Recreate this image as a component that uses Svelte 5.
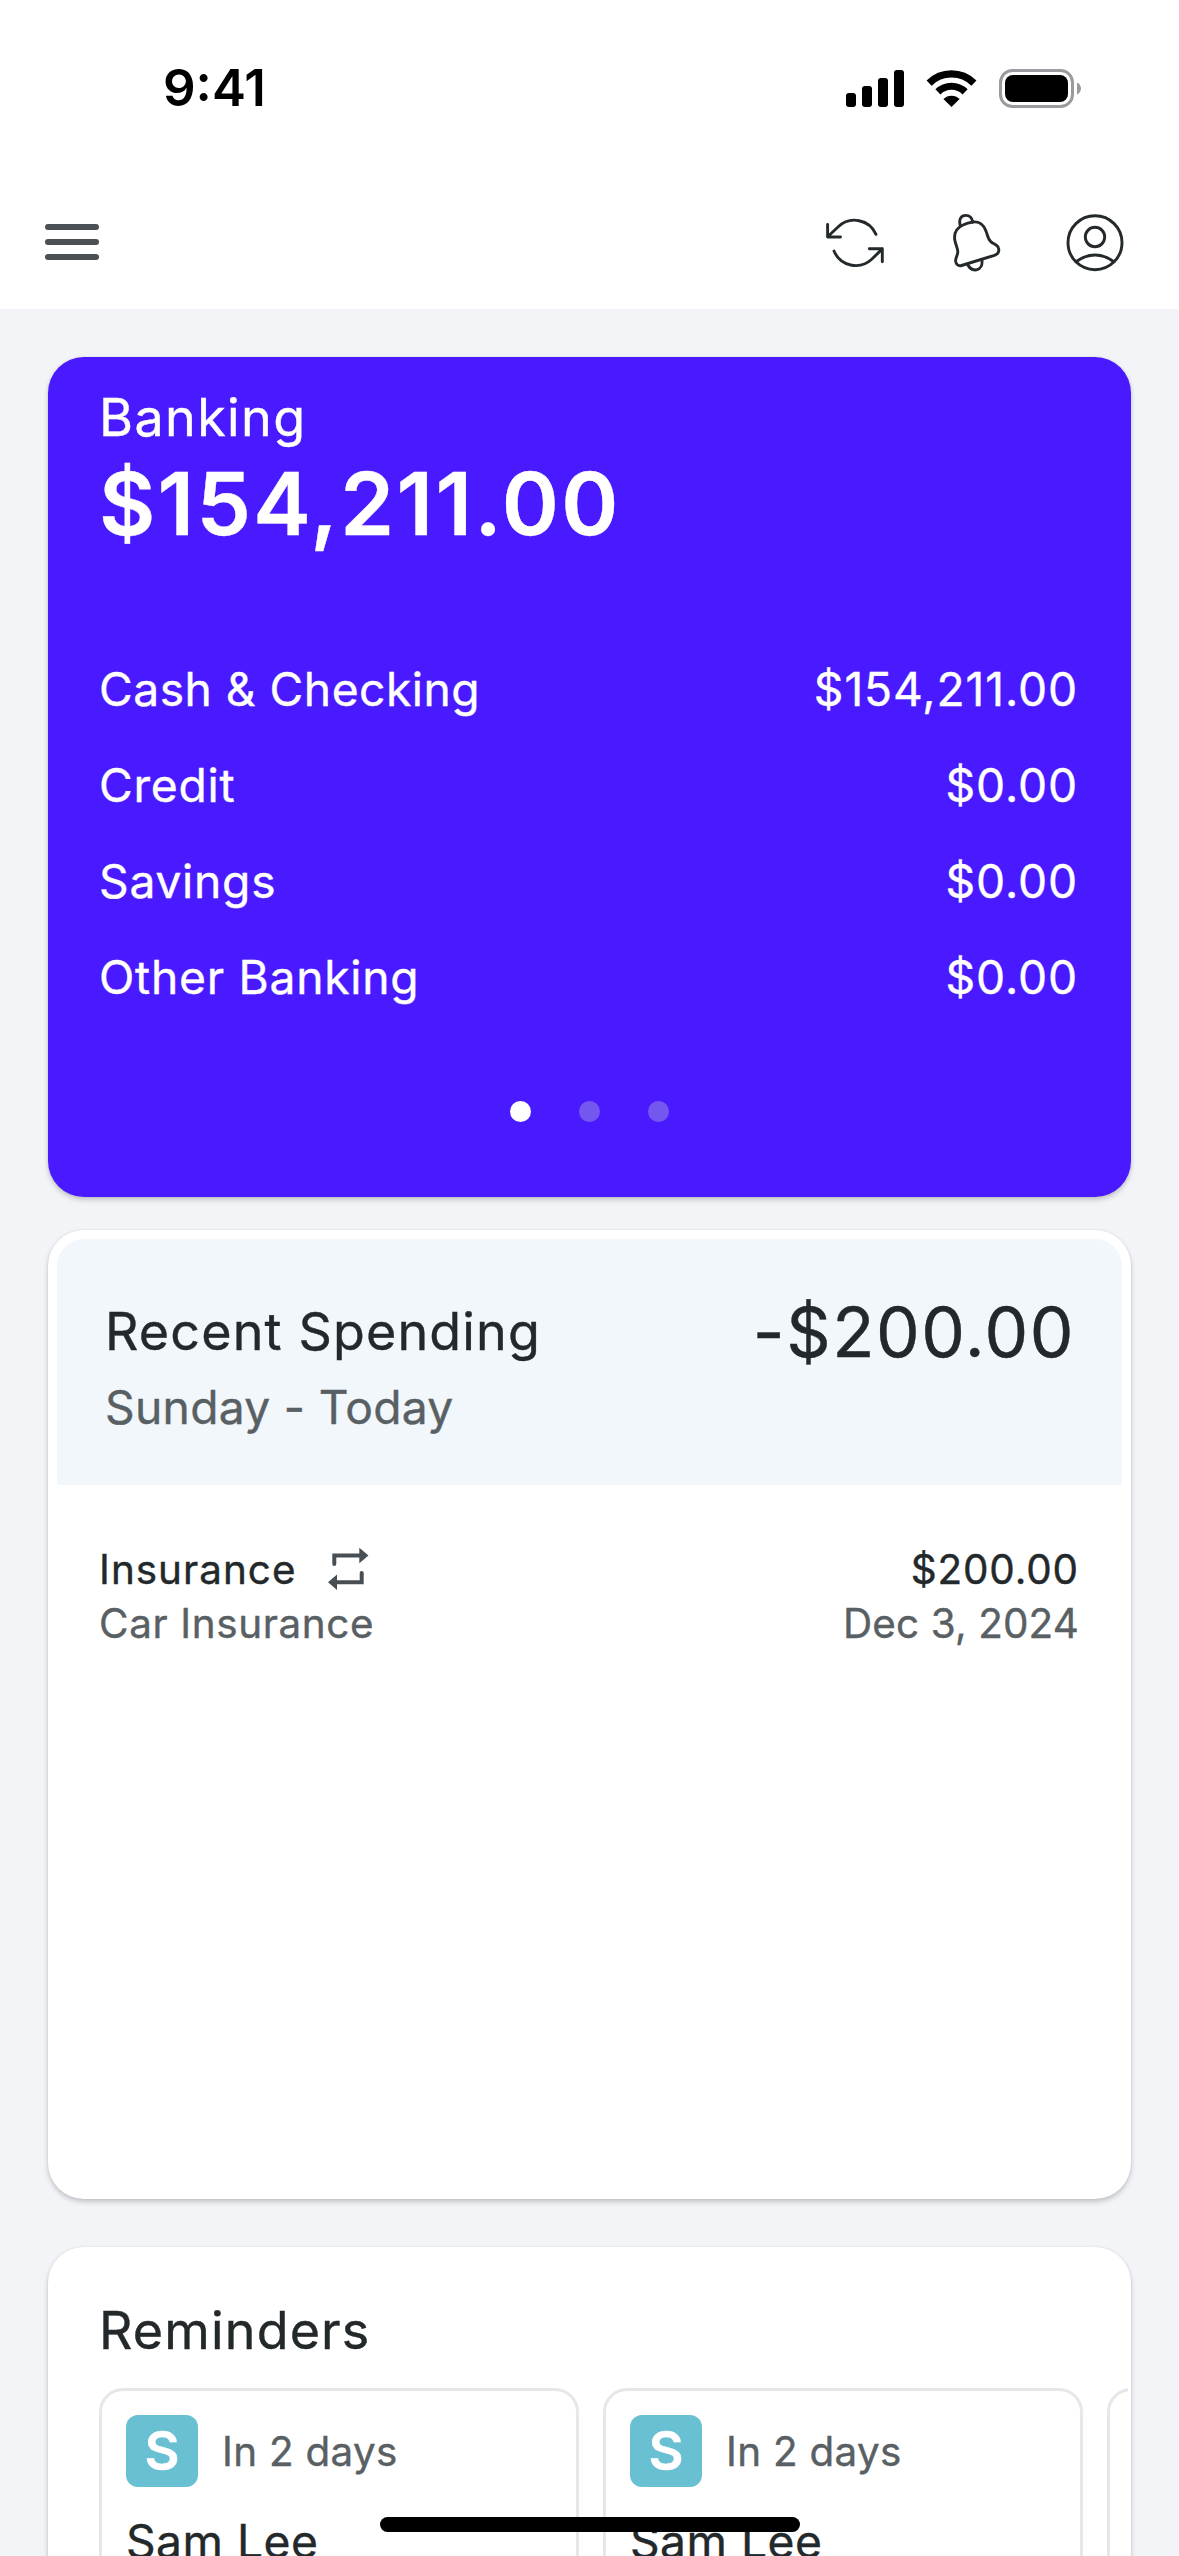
<script>
  const accounts = [
    ['Cash & Checking', '$154,211.00'],
    ['Credit', '$0.00'],
    ['Savings', '$0.00'],
    ['Other Banking', '$0.00']
  ];
  const reminders = [
    { name: 'Sam Lee', due: 'In 2 days' },
    { name: 'Sam Lee', due: 'In 2 days' }
  ];
</script>

<div class="screen">
  <header>
    <div class="status">
      <span class="time">9:41</span>
      <div class="indicators">
        <svg width="58" height="37" viewBox="0 0 58 37">
          <rect x="0" y="23" width="10" height="14" rx="3" />
          <rect x="16" y="16" width="10" height="21" rx="3" />
          <rect x="32" y="8" width="10" height="29" rx="3" />
          <rect x="48" y="0" width="10" height="37" rx="3" />
        </svg>
        <svg width="51" height="37" viewBox="0 0 51 37">
          <path d="M3.1 13.1A31.8 31.8 0 0 1 47.9 13.1M11.9 21.9A19.2 19.2 0 0 1 39.1 21.9" fill="none" stroke="#000" stroke-width="7.2" />
          <path d="M25.5 37L17.4 29A11.5 11.5 0 0 1 33.6 29Z" />
        </svg>
        <svg width="82" height="39" viewBox="0 0 82 39">
          <rect x="1.5" y="1.5" width="72" height="36" rx="12" fill="none" stroke="#999b9f" stroke-width="3" />
          <rect x="6" y="6" width="63" height="27" rx="8" />
          <path d="M78 13.5C80.5 14.5 82 17 82 19.5S80.5 24.5 78 25.5Z" fill="#999b9f" />
        </svg>
      </div>
    </div>
    <nav>
      <div class="menu"><i></i><i></i><i></i></div>
      <div class="actions">
        <svg width="60" height="60" viewBox="0 0 60 60">
          <path d="M51 21.3A23.5 23.5 0 0 0 13.3 13.7L2.6 23.7M2.6 11.5V24H15.5M9 38A23.5 23.5 0 0 0 46.7 46.3L57.3 35.9M44.3 35.7H57.3V48.7" />
        </svg>
        <svg width="60" height="60" viewBox="-3 0 60 60">
          <path d="M13.5 52.5L46.5 42.3C50 41 51.3 38 50.5 35C49.7 31.5 45.5 31 43 28.8C39.8 26 39.5 22 38.2 18.5C36 12 31 8.2 25 9C22 9.4 18 10.5 15 12C8.5 15 5.8 20.5 6.8 27C7.5 31.5 9.8 35 9.8 39C9.8 42.5 7.3 44.5 7.6 48C7.9 51.5 10.5 53.4 13.5 52.5Z" />
          <path d="M12.3 12.5C10.3 6 13.5 2.4 17.7 2.4C21.5 2.4 24 4.8 24.8 9M19.3 51C22 56.5 25.5 57.3 28.5 56.8C32.5 56 34.8 52 33.8 46.5" />
        </svg>
        <svg width="60" height="60" viewBox="0 0 60 60">
          <circle cx="30" cy="29.7" r="27" />
          <circle cx="30" cy="24" r="9.7" />
          <path d="M11 48.7Q30 35.3 49 48.7" />
        </svg>
      </div>
    </nav>
  </header>

  <main>
    <section class="card banking">
      <h2>Banking</h2>
      <div class="total">$154,211.00</div>
      <div class="accounts">
        {#each accounts as [name, amount]}
          <div class="account"><span class="name">{name}</span><span>{amount}</span></div>
        {/each}
      </div>
      <div class="dots"><i class="on"></i><i></i><i></i></div>
    </section>

    <section class="card spending">
      <div class="summary">
        <div class="period">
          <h2>Recent Spending</h2>
          <p>Sunday - Today</p>
        </div>
        <div class="spent">-$200.00</div>
      </div>
      <div class="transaction">
        <div>
          <div class="line category">
            <span>Insurance</span>
            <svg width="41" height="44" viewBox="0 0 41 44">
              <path d="M6.3 17V8.5H32M33.7 26V35.3H8" fill="none" stroke="#484f54" stroke-width="4" stroke-linecap="round" />
              <path d="M31.3 .7L40.5 8.5L31.3 16.2ZM9 27.5L0 35.3L9 43Z" fill="#484f54" />
            </svg>
          </div>
          <div class="line muted payee-name">Car Insurance</div>
        </div>
        <div class="right">
          <div class="line price">$200.00</div>
          <div class="line muted date">Dec 3, 2024</div>
        </div>
      </div>
    </section>

    <section class="card reminders">
      <h2>Reminders</h2>
      <div class="scroller">
        {#each reminders as r}
          <article>
            <div class="due"><span class="avatar">S</span><span>{r.due}</span></div>
            <div class="payee">{r.name}</div>
          </article>
        {/each}
        <article></article>
      </div>
    </section>
  </main>
  <div class="home"></div>
</div>

<style>
  :global(body) { margin: 0; }
  .screen {
    position: relative; width: 1179px; height: 2556px; overflow: hidden;
    background: #f3f4f7; color: #23282b; font-family: Inter, sans-serif;
  }
  header { background: #fff; height: 309px; }
  .status {
    height: 176px; padding: 0 98px 0 163px; display: flex;
    align-items: center; justify-content: space-between;
  }
  .time { font-size: 51px; line-height: 60px; font-weight: 600; color: #000; }
  .indicators { display: flex; align-items: center; gap: 22px; }
  svg { display: block; }
  nav {
    height: 132px; padding: 0 54px 1px 45px; display: flex;
    align-items: center; justify-content: space-between;
  }
  .menu { display: grid; gap: 9px; width: 54px; }
  .menu i { height: 6px; border-radius: 3px; background: #4a5054; }
  .actions { display: flex; gap: 60px; padding-top: 2px; }
  .actions svg { fill: none; stroke: #24292c; stroke-width: 2.9; stroke-linecap: round; stroke-linejoin: round; }
  main { padding: 48px 48px 0; -webkit-text-stroke: .4px currentColor; }
  .card {
    box-sizing: border-box; background: #fff; border-radius: 36px;
    box-shadow: 0 3px 5px rgba(30, 38, 42, .22), 0 0 3px rgba(30, 38, 42, .08);
  }
  h2, p { margin: 0; font-weight: 400; }
  h2 { font-size: 52px; line-height: 60px; letter-spacing: 1.15px; }
  .banking { height: 840px; padding: 31px 53px 0 51px; background: #491aff; color: #fff; }
  .banking h2 { letter-spacing: 1.4px; }
  .total { margin-top: 11px; font-size: 86.6px; line-height: 90px; font-weight: 600; letter-spacing: 2.3px; }
  .accounts { margin-top: 92px; font-size: 46.2px; line-height: 96px; letter-spacing: .9px; }
  .account { display: flex; justify-content: space-between; }
  .name { letter-spacing: .75px; }
  .account:first-child .name { letter-spacing: .5px; }
  .dots { margin-top: 76px; padding-left: 2px; display: flex; justify-content: center; gap: 48px; }
  .dots i { width: 21px; height: 21px; border-radius: 50%; background: #7357ee; }
  .dots .on { background: #fff; }
  .spending { margin-top: 33px; height: 969px; padding: 9px; }
  .summary {
    box-sizing: border-box; height: 246px; padding: 51px 47px 0 48px; display: flex;
    justify-content: space-between; background: #f2f7fc; border-radius: 27px 27px 3px 3px;
  }
  .period { margin-top: 12px; }
  .period p { margin-top: 15px; font-size: 46.2px; line-height: 60px; letter-spacing: .3px; color: #596064; }
  .spent { font-size: 69.3px; line-height: 84px; letter-spacing: 1.54px; }
  .transaction {
    padding: 58px 43px 0 42px; display: flex; justify-content: space-between;
    font-size: 40.4px; line-height: 54px;
  }
  .line { display: flex; align-items: center; height: 54px; gap: 31px; }
  .line svg { margin-bottom: 2px; }
  .category { letter-spacing: 1.03px; }
  .payee-name { letter-spacing: .63px; }
  .price { letter-spacing: .9px; }
  .date { letter-spacing: .15px; }
  .muted { color: #596064; }
  .right .line { justify-content: flex-end; }
  .reminders { margin-top: 48px; height: 600px; padding: 54px 3px 0 51px; }
  .scroller { margin-top: 27px; display: flex; gap: 24px; overflow: hidden; }
  article {
    box-sizing: border-box; flex: none; width: 480px; height: 400px; padding: 24px;
    border: 3px solid #e6e7e9; border-radius: 24px;
  }
  .due { display: flex; align-items: center; gap: 24px; font-size: 40.4px; letter-spacing: .3px; color: #596064; }
  .avatar {
    width: 72px; height: 72px; border-radius: 12px; background: #68c0d2; color: #fff;
    font-size: 54px; line-height: 71px; letter-spacing: 0; font-weight: 600; text-align: center;
  }
  .payee { margin-top: 24px; font-size: 46.2px; line-height: 60px; letter-spacing: .49px; }
  .home {
    position: absolute; left: 380px; bottom: 24px; width: 420px; height: 15px;
    border-radius: 8px; background: #000;
  }
</style>
